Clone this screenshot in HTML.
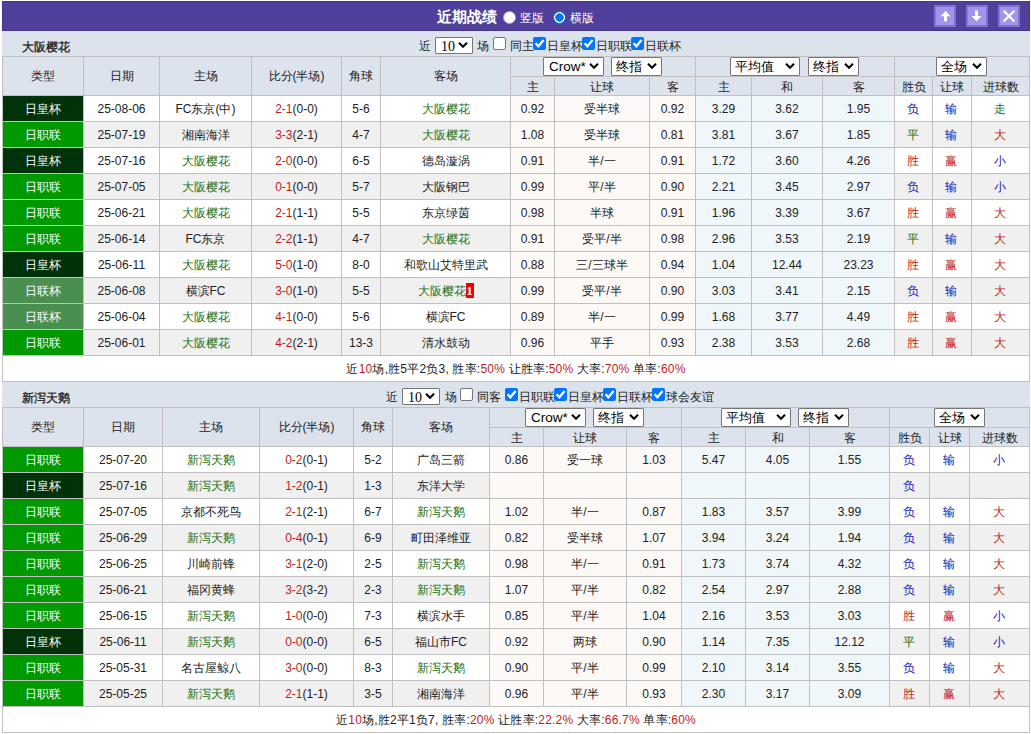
<!DOCTYPE html><html><head><meta charset="utf-8"><style>
html,body{margin:0;padding:0;background:#fff;}
body{width:1031px;height:734px;position:relative;overflow:hidden;font-family:"Liberation Sans",sans-serif;font-size:12px;color:#222222;}
body div{position:absolute;}
.t{text-align:center;white-space:nowrap;}
.sel{background:#fff;border:1px solid #767676;border-radius:1px;color:#000;}
.cb{width:11px;height:11px;border:1px solid #767676;border-radius:2px;background:#fff;}
.cb.on{width:13px;height:13px;border:none;background:#0075ff;}
.radio{width:11px;height:11px;border-radius:50%;background:#fff;border:1px solid #aaa;}
.radio.on{width:13px;height:13px;border:none;background:radial-gradient(circle at 6.5px 6.5px,#0075ff 0,#0075ff 4px,#fff 4.3px,#fff 5.2px,#0075ff 5.5px);}

.btn{width:18px;height:18px;background:#a294ea;border:2px solid #7f70d4;}
.badge{display:inline-block;background:#e00;color:#fff;font-weight:bold;font-family:'Liberation Serif',serif;font-size:13px;line-height:15px;width:8px;text-align:center;vertical-align:top;margin-top:4px;}
</style></head><body>
<div style="left:2px;top:1px;width:1028px;height:30px;background:#50409c;box-sizing:border-box;border:1px solid #43358a;"></div>
<div style="left:2px;top:31px;width:1028px;height:1px;background:#e4e0fa;"></div>
<div class="t" style="left:437px;top:3px;height:28px;line-height:28px;color:#fff;font-weight:bold;font-size:15px;text-align:left;white-space:nowrap;">近期战绩</div>
<div class="radio" style="left:503px;top:11px;"></div>
<div class="t" style="left:520px;top:4px;height:28px;line-height:28px;color:#fff;font-size:12px;text-align:left;white-space:nowrap;">竖版</div>
<div class="radio on" style="left:553px;top:11px;"></div>
<div class="t" style="left:570px;top:4px;height:28px;line-height:28px;color:#fff;font-size:12px;text-align:left;white-space:nowrap;">横版</div>
<div class="btn" style="left:934px;top:5px;"><svg width="22" height="22" viewBox="0 0 22 22" style="position:absolute;left:-2px;top:-2px"><path d="M11.5 6 L16.5 11.3 L13 11.3 L13 16.2 L10 16.2 L10 11.3 L6.5 11.3 Z" fill="#fff"/></svg></div><div class="btn" style="left:966px;top:5px;"><svg width="22" height="22" viewBox="0 0 22 22" style="position:absolute;left:-2px;top:-2px"><path d="M9 5.6 L12 5.6 L12 11 L15.5 11 L10.5 16.3 L5.5 11 L9 11 Z" fill="#fff"/></svg></div><div class="btn" style="left:998px;top:5px;"><svg width="22" height="22" viewBox="0 0 22 22" style="position:absolute;left:-2px;top:-2px"><path d="M5.6 5.8 L16.4 16.4 M16.4 5.8 L5.6 16.4" stroke="#fff" stroke-width="2.1"/></svg></div><div style="left:2px;top:31px;width:1028px;height:25px;background:#dce3ed;"></div><div class="t" style="left:22px;top:35px;width:180px;height:25px;line-height:25px;color:#1a1a1a;text-align:left;font-weight:normal;-webkit-text-stroke:0.3px #1a1a1a;">大阪樱花</div><div style="left:2px;top:56px;width:1028px;height:39px;background:#dce3ed;"></div><div style="left:2px;top:96px;width:1027px;height:25px;background:#ffffff;"></div><div style="left:3px;top:96px;width:80px;height:25px;background:#003309;"></div><div style="left:511px;top:96px;width:43px;height:25px;background:#fdf9f6;"></div><div style="left:555px;top:96px;width:94px;height:25px;background:#fdf9f6;"></div><div style="left:650px;top:96px;width:45px;height:25px;background:#fdf9f6;"></div><div style="left:696px;top:96px;width:55px;height:25px;background:#f0f7fb;"></div><div style="left:752px;top:96px;width:70px;height:25px;background:#f0f7fb;"></div><div style="left:823px;top:96px;width:71px;height:25px;background:#f0f7fb;"></div><div style="left:2px;top:122px;width:1027px;height:25px;background:#f0f0f0;"></div><div style="left:3px;top:122px;width:80px;height:25px;background:#009900;"></div><div style="left:511px;top:122px;width:43px;height:25px;background:#fdf9f6;"></div><div style="left:555px;top:122px;width:94px;height:25px;background:#fdf9f6;"></div><div style="left:650px;top:122px;width:45px;height:25px;background:#fdf9f6;"></div><div style="left:696px;top:122px;width:55px;height:25px;background:#f0f7fb;"></div><div style="left:752px;top:122px;width:70px;height:25px;background:#f0f7fb;"></div><div style="left:823px;top:122px;width:71px;height:25px;background:#f0f7fb;"></div><div style="left:2px;top:148px;width:1027px;height:25px;background:#ffffff;"></div><div style="left:3px;top:148px;width:80px;height:25px;background:#003309;"></div><div style="left:511px;top:148px;width:43px;height:25px;background:#fdf9f6;"></div><div style="left:555px;top:148px;width:94px;height:25px;background:#fdf9f6;"></div><div style="left:650px;top:148px;width:45px;height:25px;background:#fdf9f6;"></div><div style="left:696px;top:148px;width:55px;height:25px;background:#f0f7fb;"></div><div style="left:752px;top:148px;width:70px;height:25px;background:#f0f7fb;"></div><div style="left:823px;top:148px;width:71px;height:25px;background:#f0f7fb;"></div><div style="left:2px;top:174px;width:1027px;height:25px;background:#f0f0f0;"></div><div style="left:3px;top:174px;width:80px;height:25px;background:#009900;"></div><div style="left:511px;top:174px;width:43px;height:25px;background:#fdf9f6;"></div><div style="left:555px;top:174px;width:94px;height:25px;background:#fdf9f6;"></div><div style="left:650px;top:174px;width:45px;height:25px;background:#fdf9f6;"></div><div style="left:696px;top:174px;width:55px;height:25px;background:#f0f7fb;"></div><div style="left:752px;top:174px;width:70px;height:25px;background:#f0f7fb;"></div><div style="left:823px;top:174px;width:71px;height:25px;background:#f0f7fb;"></div><div style="left:2px;top:200px;width:1027px;height:25px;background:#ffffff;"></div><div style="left:3px;top:200px;width:80px;height:25px;background:#009900;"></div><div style="left:511px;top:200px;width:43px;height:25px;background:#fdf9f6;"></div><div style="left:555px;top:200px;width:94px;height:25px;background:#fdf9f6;"></div><div style="left:650px;top:200px;width:45px;height:25px;background:#fdf9f6;"></div><div style="left:696px;top:200px;width:55px;height:25px;background:#f0f7fb;"></div><div style="left:752px;top:200px;width:70px;height:25px;background:#f0f7fb;"></div><div style="left:823px;top:200px;width:71px;height:25px;background:#f0f7fb;"></div><div style="left:2px;top:226px;width:1027px;height:25px;background:#f0f0f0;"></div><div style="left:3px;top:226px;width:80px;height:25px;background:#009900;"></div><div style="left:511px;top:226px;width:43px;height:25px;background:#fdf9f6;"></div><div style="left:555px;top:226px;width:94px;height:25px;background:#fdf9f6;"></div><div style="left:650px;top:226px;width:45px;height:25px;background:#fdf9f6;"></div><div style="left:696px;top:226px;width:55px;height:25px;background:#f0f7fb;"></div><div style="left:752px;top:226px;width:70px;height:25px;background:#f0f7fb;"></div><div style="left:823px;top:226px;width:71px;height:25px;background:#f0f7fb;"></div><div style="left:2px;top:252px;width:1027px;height:25px;background:#ffffff;"></div><div style="left:3px;top:252px;width:80px;height:25px;background:#003309;"></div><div style="left:511px;top:252px;width:43px;height:25px;background:#fdf9f6;"></div><div style="left:555px;top:252px;width:94px;height:25px;background:#fdf9f6;"></div><div style="left:650px;top:252px;width:45px;height:25px;background:#fdf9f6;"></div><div style="left:696px;top:252px;width:55px;height:25px;background:#f0f7fb;"></div><div style="left:752px;top:252px;width:70px;height:25px;background:#f0f7fb;"></div><div style="left:823px;top:252px;width:71px;height:25px;background:#f0f7fb;"></div><div style="left:2px;top:278px;width:1027px;height:25px;background:#f0f0f0;"></div><div style="left:3px;top:278px;width:80px;height:25px;background:#4a8e50;"></div><div style="left:511px;top:278px;width:43px;height:25px;background:#fdf9f6;"></div><div style="left:555px;top:278px;width:94px;height:25px;background:#fdf9f6;"></div><div style="left:650px;top:278px;width:45px;height:25px;background:#fdf9f6;"></div><div style="left:696px;top:278px;width:55px;height:25px;background:#f0f7fb;"></div><div style="left:752px;top:278px;width:70px;height:25px;background:#f0f7fb;"></div><div style="left:823px;top:278px;width:71px;height:25px;background:#f0f7fb;"></div><div style="left:2px;top:304px;width:1027px;height:25px;background:#ffffff;"></div><div style="left:3px;top:304px;width:80px;height:25px;background:#4a8e50;"></div><div style="left:511px;top:304px;width:43px;height:25px;background:#fdf9f6;"></div><div style="left:555px;top:304px;width:94px;height:25px;background:#fdf9f6;"></div><div style="left:650px;top:304px;width:45px;height:25px;background:#fdf9f6;"></div><div style="left:696px;top:304px;width:55px;height:25px;background:#f0f7fb;"></div><div style="left:752px;top:304px;width:70px;height:25px;background:#f0f7fb;"></div><div style="left:823px;top:304px;width:71px;height:25px;background:#f0f7fb;"></div><div style="left:2px;top:330px;width:1027px;height:25px;background:#f0f0f0;"></div><div style="left:3px;top:330px;width:80px;height:25px;background:#009900;"></div><div style="left:511px;top:330px;width:43px;height:25px;background:#fdf9f6;"></div><div style="left:555px;top:330px;width:94px;height:25px;background:#fdf9f6;"></div><div style="left:650px;top:330px;width:45px;height:25px;background:#fdf9f6;"></div><div style="left:696px;top:330px;width:55px;height:25px;background:#f0f7fb;"></div><div style="left:752px;top:330px;width:70px;height:25px;background:#f0f7fb;"></div><div style="left:823px;top:330px;width:71px;height:25px;background:#f0f7fb;"></div><div style="left:2px;top:356px;width:1027px;height:25px;background:#ffffff;"></div><div style="left:2px;top:56px;width:1028px;height:1px;background:#c0c0c0;"></div><div style="left:510px;top:76px;width:385px;height:1px;background:#c0c0c0;"></div><div style="left:894px;top:76px;width:136px;height:1px;background:#c0c0c0;"></div><div style="left:2px;top:95px;width:1028px;height:1px;background:#c0c0c0;"></div><div style="left:2px;top:121px;width:1028px;height:1px;background:#c0c0c0;"></div><div style="left:2px;top:147px;width:1028px;height:1px;background:#c0c0c0;"></div><div style="left:2px;top:173px;width:1028px;height:1px;background:#c0c0c0;"></div><div style="left:2px;top:199px;width:1028px;height:1px;background:#c0c0c0;"></div><div style="left:2px;top:225px;width:1028px;height:1px;background:#c0c0c0;"></div><div style="left:2px;top:251px;width:1028px;height:1px;background:#c0c0c0;"></div><div style="left:2px;top:277px;width:1028px;height:1px;background:#c0c0c0;"></div><div style="left:2px;top:303px;width:1028px;height:1px;background:#c0c0c0;"></div><div style="left:2px;top:329px;width:1028px;height:1px;background:#c0c0c0;"></div><div style="left:2px;top:355px;width:1028px;height:1px;background:#c0c0c0;"></div><div style="left:2px;top:381px;width:1028px;height:1px;background:#c0c0c0;"></div><div style="left:2px;top:56px;width:1px;height:326px;background:#c0c0c0;"></div><div style="left:83px;top:56px;width:1px;height:300px;background:#c0c0c0;"></div><div style="left:159px;top:56px;width:1px;height:300px;background:#c0c0c0;"></div><div style="left:251px;top:56px;width:1px;height:300px;background:#c0c0c0;"></div><div style="left:341px;top:56px;width:1px;height:300px;background:#c0c0c0;"></div><div style="left:380px;top:56px;width:1px;height:300px;background:#c0c0c0;"></div><div style="left:510px;top:56px;width:1px;height:300px;background:#c0c0c0;"></div><div style="left:554px;top:76px;width:1px;height:280px;background:#c0c0c0;"></div><div style="left:649px;top:76px;width:1px;height:280px;background:#c0c0c0;"></div><div style="left:695px;top:56px;width:1px;height:300px;background:#c0c0c0;"></div><div style="left:751px;top:76px;width:1px;height:280px;background:#c0c0c0;"></div><div style="left:822px;top:76px;width:1px;height:280px;background:#c0c0c0;"></div><div style="left:894px;top:56px;width:1px;height:300px;background:#c0c0c0;"></div><div style="left:932px;top:76px;width:1px;height:280px;background:#c0c0c0;"></div><div style="left:971px;top:76px;width:1px;height:280px;background:#c0c0c0;"></div><div style="left:1029px;top:56px;width:1px;height:326px;background:#c0c0c0;"></div><div class="t" style="left:3px;top:57px;width:80px;height:38px;line-height:38px;color:#222222;">类型</div><div class="t" style="left:84px;top:57px;width:75px;height:38px;line-height:38px;color:#222222;">日期</div><div class="t" style="left:160px;top:57px;width:91px;height:38px;line-height:38px;color:#222222;">主场</div><div class="t" style="left:252px;top:57px;width:89px;height:38px;line-height:38px;color:#222222;">比分(半场)</div><div class="t" style="left:342px;top:57px;width:38px;height:38px;line-height:38px;color:#222222;">角球</div><div class="t" style="left:381px;top:57px;width:129px;height:38px;line-height:38px;color:#222222;">客场</div><div class="t" style="left:511px;top:78px;width:43px;height:18px;line-height:18px;color:#222222;">主</div><div class="t" style="left:555px;top:78px;width:94px;height:18px;line-height:18px;color:#222222;">让球</div><div class="t" style="left:650px;top:78px;width:45px;height:18px;line-height:18px;color:#222222;">客</div><div class="t" style="left:696px;top:78px;width:55px;height:18px;line-height:18px;color:#222222;">主</div><div class="t" style="left:752px;top:78px;width:70px;height:18px;line-height:18px;color:#222222;">和</div><div class="t" style="left:823px;top:78px;width:71px;height:18px;line-height:18px;color:#222222;">客</div><div class="t" style="left:895px;top:78px;width:37px;height:18px;line-height:18px;color:#222222;">胜负</div><div class="t" style="left:933px;top:78px;width:38px;height:18px;line-height:18px;color:#222222;">让球</div><div class="t" style="left:972px;top:78px;width:57px;height:18px;line-height:18px;color:#222222;">进球数</div><div class="t" style="left:3px;top:97px;width:80px;height:25px;line-height:25px;color:#ffffff;font-size:12px;">日皇杯</div><div class="t" style="left:84px;top:97px;width:75px;height:25px;line-height:25px;color:#222222;font-size:12px;">25-08-06</div><div class="t" style="left:160px;top:97px;width:91px;height:25px;line-height:25px;color:#222222;font-size:12px;">FC东京(中)</div><div class="t" style="left:252px;top:97px;width:89px;height:25px;line-height:25px;color:#222222;font-size:12px;"><span style="color:#c01c1c">2-1</span>(0-0)</div><div class="t" style="left:342px;top:97px;width:38px;height:25px;line-height:25px;color:#222222;font-size:12px;">5-6</div><div class="t" style="left:381px;top:97px;width:129px;height:25px;line-height:25px;color:#207020;font-size:12px;">大阪樱花</div><div class="t" style="left:511px;top:97px;width:43px;height:25px;line-height:25px;color:#222222;font-size:12px;">0.92</div><div class="t" style="left:555px;top:97px;width:94px;height:25px;line-height:25px;color:#222222;font-size:12px;">受半球</div><div class="t" style="left:650px;top:97px;width:45px;height:25px;line-height:25px;color:#222222;font-size:12px;">0.92</div><div class="t" style="left:696px;top:97px;width:55px;height:25px;line-height:25px;color:#222222;font-size:12px;">3.29</div><div class="t" style="left:752px;top:97px;width:70px;height:25px;line-height:25px;color:#222222;font-size:12px;">3.62</div><div class="t" style="left:823px;top:97px;width:71px;height:25px;line-height:25px;color:#222222;font-size:12px;">1.95</div><div class="t" style="left:894px;top:97px;width:37px;height:25px;line-height:25px;color:#1616b8;font-size:12px;">负</div><div class="t" style="left:932px;top:97px;width:38px;height:25px;line-height:25px;color:#1616b8;font-size:12px;">输</div><div class="t" style="left:971px;top:97px;width:57px;height:25px;line-height:25px;color:#207020;font-size:12px;">走</div><div class="t" style="left:3px;top:123px;width:80px;height:25px;line-height:25px;color:#ffffff;font-size:12px;">日职联</div><div class="t" style="left:84px;top:123px;width:75px;height:25px;line-height:25px;color:#222222;font-size:12px;">25-07-19</div><div class="t" style="left:160px;top:123px;width:91px;height:25px;line-height:25px;color:#222222;font-size:12px;">湘南海洋</div><div class="t" style="left:252px;top:123px;width:89px;height:25px;line-height:25px;color:#222222;font-size:12px;"><span style="color:#c01c1c">3-3</span>(2-1)</div><div class="t" style="left:342px;top:123px;width:38px;height:25px;line-height:25px;color:#222222;font-size:12px;">4-7</div><div class="t" style="left:381px;top:123px;width:129px;height:25px;line-height:25px;color:#207020;font-size:12px;">大阪樱花</div><div class="t" style="left:511px;top:123px;width:43px;height:25px;line-height:25px;color:#222222;font-size:12px;">1.08</div><div class="t" style="left:555px;top:123px;width:94px;height:25px;line-height:25px;color:#222222;font-size:12px;">受半球</div><div class="t" style="left:650px;top:123px;width:45px;height:25px;line-height:25px;color:#222222;font-size:12px;">0.81</div><div class="t" style="left:696px;top:123px;width:55px;height:25px;line-height:25px;color:#222222;font-size:12px;">3.81</div><div class="t" style="left:752px;top:123px;width:70px;height:25px;line-height:25px;color:#222222;font-size:12px;">3.67</div><div class="t" style="left:823px;top:123px;width:71px;height:25px;line-height:25px;color:#222222;font-size:12px;">1.85</div><div class="t" style="left:894px;top:123px;width:37px;height:25px;line-height:25px;color:#207020;font-size:12px;">平</div><div class="t" style="left:932px;top:123px;width:38px;height:25px;line-height:25px;color:#1616b8;font-size:12px;">输</div><div class="t" style="left:971px;top:123px;width:57px;height:25px;line-height:25px;color:#c01c1c;font-size:12px;">大</div><div class="t" style="left:3px;top:149px;width:80px;height:25px;line-height:25px;color:#ffffff;font-size:12px;">日皇杯</div><div class="t" style="left:84px;top:149px;width:75px;height:25px;line-height:25px;color:#222222;font-size:12px;">25-07-16</div><div class="t" style="left:160px;top:149px;width:91px;height:25px;line-height:25px;color:#207020;font-size:12px;">大阪樱花</div><div class="t" style="left:252px;top:149px;width:89px;height:25px;line-height:25px;color:#222222;font-size:12px;"><span style="color:#c01c1c">2-0</span>(0-0)</div><div class="t" style="left:342px;top:149px;width:38px;height:25px;line-height:25px;color:#222222;font-size:12px;">6-5</div><div class="t" style="left:381px;top:149px;width:129px;height:25px;line-height:25px;color:#222222;font-size:12px;">德岛漩涡</div><div class="t" style="left:511px;top:149px;width:43px;height:25px;line-height:25px;color:#222222;font-size:12px;">0.91</div><div class="t" style="left:555px;top:149px;width:94px;height:25px;line-height:25px;color:#222222;font-size:12px;">半/一</div><div class="t" style="left:650px;top:149px;width:45px;height:25px;line-height:25px;color:#222222;font-size:12px;">0.91</div><div class="t" style="left:696px;top:149px;width:55px;height:25px;line-height:25px;color:#222222;font-size:12px;">1.72</div><div class="t" style="left:752px;top:149px;width:70px;height:25px;line-height:25px;color:#222222;font-size:12px;">3.60</div><div class="t" style="left:823px;top:149px;width:71px;height:25px;line-height:25px;color:#222222;font-size:12px;">4.26</div><div class="t" style="left:894px;top:149px;width:37px;height:25px;line-height:25px;color:#c01c1c;font-size:12px;">胜</div><div class="t" style="left:932px;top:149px;width:38px;height:25px;line-height:25px;color:#c01c1c;font-size:12px;">赢</div><div class="t" style="left:971px;top:149px;width:57px;height:25px;line-height:25px;color:#1616b8;font-size:12px;">小</div><div class="t" style="left:3px;top:175px;width:80px;height:25px;line-height:25px;color:#ffffff;font-size:12px;">日职联</div><div class="t" style="left:84px;top:175px;width:75px;height:25px;line-height:25px;color:#222222;font-size:12px;">25-07-05</div><div class="t" style="left:160px;top:175px;width:91px;height:25px;line-height:25px;color:#207020;font-size:12px;">大阪樱花</div><div class="t" style="left:252px;top:175px;width:89px;height:25px;line-height:25px;color:#222222;font-size:12px;"><span style="color:#c01c1c">0-1</span>(0-0)</div><div class="t" style="left:342px;top:175px;width:38px;height:25px;line-height:25px;color:#222222;font-size:12px;">5-7</div><div class="t" style="left:381px;top:175px;width:129px;height:25px;line-height:25px;color:#222222;font-size:12px;">大阪钢巴</div><div class="t" style="left:511px;top:175px;width:43px;height:25px;line-height:25px;color:#222222;font-size:12px;">0.99</div><div class="t" style="left:555px;top:175px;width:94px;height:25px;line-height:25px;color:#222222;font-size:12px;">平/半</div><div class="t" style="left:650px;top:175px;width:45px;height:25px;line-height:25px;color:#222222;font-size:12px;">0.90</div><div class="t" style="left:696px;top:175px;width:55px;height:25px;line-height:25px;color:#222222;font-size:12px;">2.21</div><div class="t" style="left:752px;top:175px;width:70px;height:25px;line-height:25px;color:#222222;font-size:12px;">3.45</div><div class="t" style="left:823px;top:175px;width:71px;height:25px;line-height:25px;color:#222222;font-size:12px;">2.97</div><div class="t" style="left:894px;top:175px;width:37px;height:25px;line-height:25px;color:#1616b8;font-size:12px;">负</div><div class="t" style="left:932px;top:175px;width:38px;height:25px;line-height:25px;color:#1616b8;font-size:12px;">输</div><div class="t" style="left:971px;top:175px;width:57px;height:25px;line-height:25px;color:#1616b8;font-size:12px;">小</div><div class="t" style="left:3px;top:201px;width:80px;height:25px;line-height:25px;color:#ffffff;font-size:12px;">日职联</div><div class="t" style="left:84px;top:201px;width:75px;height:25px;line-height:25px;color:#222222;font-size:12px;">25-06-21</div><div class="t" style="left:160px;top:201px;width:91px;height:25px;line-height:25px;color:#207020;font-size:12px;">大阪樱花</div><div class="t" style="left:252px;top:201px;width:89px;height:25px;line-height:25px;color:#222222;font-size:12px;"><span style="color:#c01c1c">2-1</span>(1-1)</div><div class="t" style="left:342px;top:201px;width:38px;height:25px;line-height:25px;color:#222222;font-size:12px;">5-5</div><div class="t" style="left:381px;top:201px;width:129px;height:25px;line-height:25px;color:#222222;font-size:12px;">东京绿茵</div><div class="t" style="left:511px;top:201px;width:43px;height:25px;line-height:25px;color:#222222;font-size:12px;">0.98</div><div class="t" style="left:555px;top:201px;width:94px;height:25px;line-height:25px;color:#222222;font-size:12px;">半球</div><div class="t" style="left:650px;top:201px;width:45px;height:25px;line-height:25px;color:#222222;font-size:12px;">0.91</div><div class="t" style="left:696px;top:201px;width:55px;height:25px;line-height:25px;color:#222222;font-size:12px;">1.96</div><div class="t" style="left:752px;top:201px;width:70px;height:25px;line-height:25px;color:#222222;font-size:12px;">3.39</div><div class="t" style="left:823px;top:201px;width:71px;height:25px;line-height:25px;color:#222222;font-size:12px;">3.67</div><div class="t" style="left:894px;top:201px;width:37px;height:25px;line-height:25px;color:#c01c1c;font-size:12px;">胜</div><div class="t" style="left:932px;top:201px;width:38px;height:25px;line-height:25px;color:#c01c1c;font-size:12px;">赢</div><div class="t" style="left:971px;top:201px;width:57px;height:25px;line-height:25px;color:#c01c1c;font-size:12px;">大</div><div class="t" style="left:3px;top:227px;width:80px;height:25px;line-height:25px;color:#ffffff;font-size:12px;">日职联</div><div class="t" style="left:84px;top:227px;width:75px;height:25px;line-height:25px;color:#222222;font-size:12px;">25-06-14</div><div class="t" style="left:160px;top:227px;width:91px;height:25px;line-height:25px;color:#222222;font-size:12px;">FC东京</div><div class="t" style="left:252px;top:227px;width:89px;height:25px;line-height:25px;color:#222222;font-size:12px;"><span style="color:#c01c1c">2-2</span>(1-1)</div><div class="t" style="left:342px;top:227px;width:38px;height:25px;line-height:25px;color:#222222;font-size:12px;">4-7</div><div class="t" style="left:381px;top:227px;width:129px;height:25px;line-height:25px;color:#207020;font-size:12px;">大阪樱花</div><div class="t" style="left:511px;top:227px;width:43px;height:25px;line-height:25px;color:#222222;font-size:12px;">0.91</div><div class="t" style="left:555px;top:227px;width:94px;height:25px;line-height:25px;color:#222222;font-size:12px;">受平/半</div><div class="t" style="left:650px;top:227px;width:45px;height:25px;line-height:25px;color:#222222;font-size:12px;">0.98</div><div class="t" style="left:696px;top:227px;width:55px;height:25px;line-height:25px;color:#222222;font-size:12px;">2.96</div><div class="t" style="left:752px;top:227px;width:70px;height:25px;line-height:25px;color:#222222;font-size:12px;">3.53</div><div class="t" style="left:823px;top:227px;width:71px;height:25px;line-height:25px;color:#222222;font-size:12px;">2.19</div><div class="t" style="left:894px;top:227px;width:37px;height:25px;line-height:25px;color:#207020;font-size:12px;">平</div><div class="t" style="left:932px;top:227px;width:38px;height:25px;line-height:25px;color:#1616b8;font-size:12px;">输</div><div class="t" style="left:971px;top:227px;width:57px;height:25px;line-height:25px;color:#c01c1c;font-size:12px;">大</div><div class="t" style="left:3px;top:253px;width:80px;height:25px;line-height:25px;color:#ffffff;font-size:12px;">日皇杯</div><div class="t" style="left:84px;top:253px;width:75px;height:25px;line-height:25px;color:#222222;font-size:12px;">25-06-11</div><div class="t" style="left:160px;top:253px;width:91px;height:25px;line-height:25px;color:#207020;font-size:12px;">大阪樱花</div><div class="t" style="left:252px;top:253px;width:89px;height:25px;line-height:25px;color:#222222;font-size:12px;"><span style="color:#c01c1c">5-0</span>(1-0)</div><div class="t" style="left:342px;top:253px;width:38px;height:25px;line-height:25px;color:#222222;font-size:12px;">8-0</div><div class="t" style="left:381px;top:253px;width:129px;height:25px;line-height:25px;color:#222222;font-size:12px;">和歌山艾特里武</div><div class="t" style="left:511px;top:253px;width:43px;height:25px;line-height:25px;color:#222222;font-size:12px;">0.88</div><div class="t" style="left:555px;top:253px;width:94px;height:25px;line-height:25px;color:#222222;font-size:12px;">三/三球半</div><div class="t" style="left:650px;top:253px;width:45px;height:25px;line-height:25px;color:#222222;font-size:12px;">0.94</div><div class="t" style="left:696px;top:253px;width:55px;height:25px;line-height:25px;color:#222222;font-size:12px;">1.04</div><div class="t" style="left:752px;top:253px;width:70px;height:25px;line-height:25px;color:#222222;font-size:12px;">12.44</div><div class="t" style="left:823px;top:253px;width:71px;height:25px;line-height:25px;color:#222222;font-size:12px;">23.23</div><div class="t" style="left:894px;top:253px;width:37px;height:25px;line-height:25px;color:#c01c1c;font-size:12px;">胜</div><div class="t" style="left:932px;top:253px;width:38px;height:25px;line-height:25px;color:#c01c1c;font-size:12px;">赢</div><div class="t" style="left:971px;top:253px;width:57px;height:25px;line-height:25px;color:#c01c1c;font-size:12px;">大</div><div class="t" style="left:3px;top:279px;width:80px;height:25px;line-height:25px;color:#ffffff;font-size:12px;">日联杯</div><div class="t" style="left:84px;top:279px;width:75px;height:25px;line-height:25px;color:#222222;font-size:12px;">25-06-08</div><div class="t" style="left:160px;top:279px;width:91px;height:25px;line-height:25px;color:#222222;font-size:12px;">横滨FC</div><div class="t" style="left:252px;top:279px;width:89px;height:25px;line-height:25px;color:#222222;font-size:12px;"><span style="color:#c01c1c">3-0</span>(1-0)</div><div class="t" style="left:342px;top:279px;width:38px;height:25px;line-height:25px;color:#222222;font-size:12px;">5-5</div><div class="t" style="left:381px;top:279px;width:129px;height:25px;line-height:25px;color:#207020;font-size:12px;">大阪樱花<span class="badge">1</span></div><div class="t" style="left:511px;top:279px;width:43px;height:25px;line-height:25px;color:#222222;font-size:12px;">0.99</div><div class="t" style="left:555px;top:279px;width:94px;height:25px;line-height:25px;color:#222222;font-size:12px;">受平/半</div><div class="t" style="left:650px;top:279px;width:45px;height:25px;line-height:25px;color:#222222;font-size:12px;">0.90</div><div class="t" style="left:696px;top:279px;width:55px;height:25px;line-height:25px;color:#222222;font-size:12px;">3.03</div><div class="t" style="left:752px;top:279px;width:70px;height:25px;line-height:25px;color:#222222;font-size:12px;">3.41</div><div class="t" style="left:823px;top:279px;width:71px;height:25px;line-height:25px;color:#222222;font-size:12px;">2.15</div><div class="t" style="left:894px;top:279px;width:37px;height:25px;line-height:25px;color:#1616b8;font-size:12px;">负</div><div class="t" style="left:932px;top:279px;width:38px;height:25px;line-height:25px;color:#1616b8;font-size:12px;">输</div><div class="t" style="left:971px;top:279px;width:57px;height:25px;line-height:25px;color:#c01c1c;font-size:12px;">大</div><div class="t" style="left:3px;top:305px;width:80px;height:25px;line-height:25px;color:#ffffff;font-size:12px;">日联杯</div><div class="t" style="left:84px;top:305px;width:75px;height:25px;line-height:25px;color:#222222;font-size:12px;">25-06-04</div><div class="t" style="left:160px;top:305px;width:91px;height:25px;line-height:25px;color:#207020;font-size:12px;">大阪樱花</div><div class="t" style="left:252px;top:305px;width:89px;height:25px;line-height:25px;color:#222222;font-size:12px;"><span style="color:#c01c1c">4-1</span>(0-0)</div><div class="t" style="left:342px;top:305px;width:38px;height:25px;line-height:25px;color:#222222;font-size:12px;">5-6</div><div class="t" style="left:381px;top:305px;width:129px;height:25px;line-height:25px;color:#222222;font-size:12px;">横滨FC</div><div class="t" style="left:511px;top:305px;width:43px;height:25px;line-height:25px;color:#222222;font-size:12px;">0.89</div><div class="t" style="left:555px;top:305px;width:94px;height:25px;line-height:25px;color:#222222;font-size:12px;">半/一</div><div class="t" style="left:650px;top:305px;width:45px;height:25px;line-height:25px;color:#222222;font-size:12px;">0.99</div><div class="t" style="left:696px;top:305px;width:55px;height:25px;line-height:25px;color:#222222;font-size:12px;">1.68</div><div class="t" style="left:752px;top:305px;width:70px;height:25px;line-height:25px;color:#222222;font-size:12px;">3.77</div><div class="t" style="left:823px;top:305px;width:71px;height:25px;line-height:25px;color:#222222;font-size:12px;">4.49</div><div class="t" style="left:894px;top:305px;width:37px;height:25px;line-height:25px;color:#c01c1c;font-size:12px;">胜</div><div class="t" style="left:932px;top:305px;width:38px;height:25px;line-height:25px;color:#c01c1c;font-size:12px;">赢</div><div class="t" style="left:971px;top:305px;width:57px;height:25px;line-height:25px;color:#c01c1c;font-size:12px;">大</div><div class="t" style="left:3px;top:331px;width:80px;height:25px;line-height:25px;color:#ffffff;font-size:12px;">日职联</div><div class="t" style="left:84px;top:331px;width:75px;height:25px;line-height:25px;color:#222222;font-size:12px;">25-06-01</div><div class="t" style="left:160px;top:331px;width:91px;height:25px;line-height:25px;color:#207020;font-size:12px;">大阪樱花</div><div class="t" style="left:252px;top:331px;width:89px;height:25px;line-height:25px;color:#222222;font-size:12px;"><span style="color:#c01c1c">4-2</span>(2-1)</div><div class="t" style="left:342px;top:331px;width:38px;height:25px;line-height:25px;color:#222222;font-size:12px;">13-3</div><div class="t" style="left:381px;top:331px;width:129px;height:25px;line-height:25px;color:#222222;font-size:12px;">清水鼓动</div><div class="t" style="left:511px;top:331px;width:43px;height:25px;line-height:25px;color:#222222;font-size:12px;">0.96</div><div class="t" style="left:555px;top:331px;width:94px;height:25px;line-height:25px;color:#222222;font-size:12px;">平手</div><div class="t" style="left:650px;top:331px;width:45px;height:25px;line-height:25px;color:#222222;font-size:12px;">0.93</div><div class="t" style="left:696px;top:331px;width:55px;height:25px;line-height:25px;color:#222222;font-size:12px;">2.38</div><div class="t" style="left:752px;top:331px;width:70px;height:25px;line-height:25px;color:#222222;font-size:12px;">3.53</div><div class="t" style="left:823px;top:331px;width:71px;height:25px;line-height:25px;color:#222222;font-size:12px;">2.68</div><div class="t" style="left:894px;top:331px;width:37px;height:25px;line-height:25px;color:#c01c1c;font-size:12px;">胜</div><div class="t" style="left:932px;top:331px;width:38px;height:25px;line-height:25px;color:#c01c1c;font-size:12px;">赢</div><div class="t" style="left:971px;top:331px;width:57px;height:25px;line-height:25px;color:#c01c1c;font-size:12px;">大</div><div class="t" style="left:3px;top:357px;width:1026px;height:25px;line-height:25px;color:#222222;font-size:12px;letter-spacing:0.2px;">近<span style="color:#c01c1c">10</span>场,胜5平2负3, 胜率:<span style="color:#c01c1c">50%</span> 让胜率:<span style="color:#c01c1c">50%</span> 大率:<span style="color:#c01c1c">70%</span> 单率:<span style="color:#c01c1c">60%</span></div><div class="t" style="left:419px;top:38px;height:16px;line-height:16px;text-align:left;white-space:nowrap;">近</div><div class="sel" style="left:435px;top:37px;width:36px;height:15px;"><span style="position:absolute;left:5px;top:0;line-height:15px;font-size:14px;font-family:'Liberation Serif',serif;padding-top:1px;">10</span><svg style="position:absolute;right:4px;top:4px" width="10" height="6" viewBox="0 0 10 6"><path d="M1 0.8 L5 4.8 L9 0.8" fill="none" stroke="#000" stroke-width="2"/></svg></div><div class="t" style="left:477px;top:38px;height:16px;line-height:16px;text-align:left;white-space:nowrap;">场</div><div class="cb" style="left:493px;top:37px;"></div><div class="t" style="left:510px;top:38px;height:16px;line-height:16px;text-align:left;white-space:nowrap;">同主</div><div class="cb on" style="left:533px;top:37px;"><svg width="13" height="13" viewBox="0 0 13 13" style="position:absolute;left:0;top:0"><path d="M2.6 6.3 L5.4 9.2 L10.6 3" fill="none" stroke="#fff" stroke-width="2.3"/></svg></div><div class="t" style="left:547px;top:38px;height:16px;line-height:16px;text-align:left;white-space:nowrap;">日皇杯</div><div class="cb on" style="left:582px;top:37px;"><svg width="13" height="13" viewBox="0 0 13 13" style="position:absolute;left:0;top:0"><path d="M2.6 6.3 L5.4 9.2 L10.6 3" fill="none" stroke="#fff" stroke-width="2.3"/></svg></div><div class="t" style="left:596px;top:38px;height:16px;line-height:16px;text-align:left;white-space:nowrap;">日职联</div><div class="cb on" style="left:631px;top:37px;"><svg width="13" height="13" viewBox="0 0 13 13" style="position:absolute;left:0;top:0"><path d="M2.6 6.3 L5.4 9.2 L10.6 3" fill="none" stroke="#fff" stroke-width="2.3"/></svg></div><div class="t" style="left:645px;top:38px;height:16px;line-height:16px;text-align:left;white-space:nowrap;">日联杯</div><div class="sel" style="left:543px;top:57px;width:59px;height:17px;"><span style="position:absolute;left:5px;top:0;line-height:17px;font-size:13.5px;">Crow*</span><svg style="position:absolute;right:4px;top:5px" width="10" height="6" viewBox="0 0 10 6"><path d="M1 0.8 L5 4.8 L9 0.8" fill="none" stroke="#000" stroke-width="2"/></svg></div><div class="sel" style="left:611px;top:57px;width:49px;height:17px;"><span style="position:absolute;left:4px;top:0;line-height:17px;font-size:13px;">终指</span><svg style="position:absolute;right:4px;top:5px" width="10" height="6" viewBox="0 0 10 6"><path d="M1 0.8 L5 4.8 L9 0.8" fill="none" stroke="#000" stroke-width="2"/></svg></div><div class="sel" style="left:730px;top:57px;width:68px;height:17px;"><span style="position:absolute;left:4px;top:0;line-height:17px;font-size:13px;">平均值</span><svg style="position:absolute;right:4px;top:5px" width="10" height="6" viewBox="0 0 10 6"><path d="M1 0.8 L5 4.8 L9 0.8" fill="none" stroke="#000" stroke-width="2"/></svg></div><div class="sel" style="left:808px;top:57px;width:49px;height:17px;"><span style="position:absolute;left:4px;top:0;line-height:17px;font-size:13px;">终指</span><svg style="position:absolute;right:4px;top:5px" width="10" height="6" viewBox="0 0 10 6"><path d="M1 0.8 L5 4.8 L9 0.8" fill="none" stroke="#000" stroke-width="2"/></svg></div><div class="sel" style="left:936px;top:57px;width:49px;height:17px;"><span style="position:absolute;left:4px;top:0;line-height:17px;font-size:13px;">全场</span><svg style="position:absolute;right:4px;top:5px" width="10" height="6" viewBox="0 0 10 6"><path d="M1 0.8 L5 4.8 L9 0.8" fill="none" stroke="#000" stroke-width="2"/></svg></div><div style="left:2px;top:382px;width:1028px;height:25px;background:#dce3ed;"></div><div class="t" style="left:22px;top:386px;width:180px;height:25px;line-height:25px;color:#1a1a1a;text-align:left;font-weight:normal;-webkit-text-stroke:0.3px #1a1a1a;">新泻天鹅</div><div style="left:2px;top:407px;width:1028px;height:39px;background:#dce3ed;"></div><div style="left:2px;top:447px;width:1027px;height:25px;background:#ffffff;"></div><div style="left:3px;top:447px;width:80px;height:25px;background:#009900;"></div><div style="left:490px;top:447px;width:53px;height:25px;background:#fdf9f6;"></div><div style="left:544px;top:447px;width:82px;height:25px;background:#fdf9f6;"></div><div style="left:627px;top:447px;width:54px;height:25px;background:#fdf9f6;"></div><div style="left:682px;top:447px;width:63px;height:25px;background:#f0f7fb;"></div><div style="left:746px;top:447px;width:63px;height:25px;background:#f0f7fb;"></div><div style="left:810px;top:447px;width:79px;height:25px;background:#f0f7fb;"></div><div style="left:2px;top:473px;width:1027px;height:25px;background:#f0f0f0;"></div><div style="left:3px;top:473px;width:80px;height:25px;background:#003309;"></div><div style="left:490px;top:473px;width:53px;height:25px;background:#fdf9f6;"></div><div style="left:544px;top:473px;width:82px;height:25px;background:#fdf9f6;"></div><div style="left:627px;top:473px;width:54px;height:25px;background:#fdf9f6;"></div><div style="left:682px;top:473px;width:63px;height:25px;background:#f0f7fb;"></div><div style="left:746px;top:473px;width:63px;height:25px;background:#f0f7fb;"></div><div style="left:810px;top:473px;width:79px;height:25px;background:#f0f7fb;"></div><div style="left:2px;top:499px;width:1027px;height:25px;background:#ffffff;"></div><div style="left:3px;top:499px;width:80px;height:25px;background:#009900;"></div><div style="left:490px;top:499px;width:53px;height:25px;background:#fdf9f6;"></div><div style="left:544px;top:499px;width:82px;height:25px;background:#fdf9f6;"></div><div style="left:627px;top:499px;width:54px;height:25px;background:#fdf9f6;"></div><div style="left:682px;top:499px;width:63px;height:25px;background:#f0f7fb;"></div><div style="left:746px;top:499px;width:63px;height:25px;background:#f0f7fb;"></div><div style="left:810px;top:499px;width:79px;height:25px;background:#f0f7fb;"></div><div style="left:2px;top:525px;width:1027px;height:25px;background:#f0f0f0;"></div><div style="left:3px;top:525px;width:80px;height:25px;background:#009900;"></div><div style="left:490px;top:525px;width:53px;height:25px;background:#fdf9f6;"></div><div style="left:544px;top:525px;width:82px;height:25px;background:#fdf9f6;"></div><div style="left:627px;top:525px;width:54px;height:25px;background:#fdf9f6;"></div><div style="left:682px;top:525px;width:63px;height:25px;background:#f0f7fb;"></div><div style="left:746px;top:525px;width:63px;height:25px;background:#f0f7fb;"></div><div style="left:810px;top:525px;width:79px;height:25px;background:#f0f7fb;"></div><div style="left:2px;top:551px;width:1027px;height:25px;background:#ffffff;"></div><div style="left:3px;top:551px;width:80px;height:25px;background:#009900;"></div><div style="left:490px;top:551px;width:53px;height:25px;background:#fdf9f6;"></div><div style="left:544px;top:551px;width:82px;height:25px;background:#fdf9f6;"></div><div style="left:627px;top:551px;width:54px;height:25px;background:#fdf9f6;"></div><div style="left:682px;top:551px;width:63px;height:25px;background:#f0f7fb;"></div><div style="left:746px;top:551px;width:63px;height:25px;background:#f0f7fb;"></div><div style="left:810px;top:551px;width:79px;height:25px;background:#f0f7fb;"></div><div style="left:2px;top:577px;width:1027px;height:25px;background:#f0f0f0;"></div><div style="left:3px;top:577px;width:80px;height:25px;background:#009900;"></div><div style="left:490px;top:577px;width:53px;height:25px;background:#fdf9f6;"></div><div style="left:544px;top:577px;width:82px;height:25px;background:#fdf9f6;"></div><div style="left:627px;top:577px;width:54px;height:25px;background:#fdf9f6;"></div><div style="left:682px;top:577px;width:63px;height:25px;background:#f0f7fb;"></div><div style="left:746px;top:577px;width:63px;height:25px;background:#f0f7fb;"></div><div style="left:810px;top:577px;width:79px;height:25px;background:#f0f7fb;"></div><div style="left:2px;top:603px;width:1027px;height:25px;background:#ffffff;"></div><div style="left:3px;top:603px;width:80px;height:25px;background:#009900;"></div><div style="left:490px;top:603px;width:53px;height:25px;background:#fdf9f6;"></div><div style="left:544px;top:603px;width:82px;height:25px;background:#fdf9f6;"></div><div style="left:627px;top:603px;width:54px;height:25px;background:#fdf9f6;"></div><div style="left:682px;top:603px;width:63px;height:25px;background:#f0f7fb;"></div><div style="left:746px;top:603px;width:63px;height:25px;background:#f0f7fb;"></div><div style="left:810px;top:603px;width:79px;height:25px;background:#f0f7fb;"></div><div style="left:2px;top:629px;width:1027px;height:25px;background:#f0f0f0;"></div><div style="left:3px;top:629px;width:80px;height:25px;background:#003309;"></div><div style="left:490px;top:629px;width:53px;height:25px;background:#fdf9f6;"></div><div style="left:544px;top:629px;width:82px;height:25px;background:#fdf9f6;"></div><div style="left:627px;top:629px;width:54px;height:25px;background:#fdf9f6;"></div><div style="left:682px;top:629px;width:63px;height:25px;background:#f0f7fb;"></div><div style="left:746px;top:629px;width:63px;height:25px;background:#f0f7fb;"></div><div style="left:810px;top:629px;width:79px;height:25px;background:#f0f7fb;"></div><div style="left:2px;top:655px;width:1027px;height:25px;background:#ffffff;"></div><div style="left:3px;top:655px;width:80px;height:25px;background:#009900;"></div><div style="left:490px;top:655px;width:53px;height:25px;background:#fdf9f6;"></div><div style="left:544px;top:655px;width:82px;height:25px;background:#fdf9f6;"></div><div style="left:627px;top:655px;width:54px;height:25px;background:#fdf9f6;"></div><div style="left:682px;top:655px;width:63px;height:25px;background:#f0f7fb;"></div><div style="left:746px;top:655px;width:63px;height:25px;background:#f0f7fb;"></div><div style="left:810px;top:655px;width:79px;height:25px;background:#f0f7fb;"></div><div style="left:2px;top:681px;width:1027px;height:25px;background:#f0f0f0;"></div><div style="left:3px;top:681px;width:80px;height:25px;background:#009900;"></div><div style="left:490px;top:681px;width:53px;height:25px;background:#fdf9f6;"></div><div style="left:544px;top:681px;width:82px;height:25px;background:#fdf9f6;"></div><div style="left:627px;top:681px;width:54px;height:25px;background:#fdf9f6;"></div><div style="left:682px;top:681px;width:63px;height:25px;background:#f0f7fb;"></div><div style="left:746px;top:681px;width:63px;height:25px;background:#f0f7fb;"></div><div style="left:810px;top:681px;width:79px;height:25px;background:#f0f7fb;"></div><div style="left:2px;top:707px;width:1027px;height:25px;background:#ffffff;"></div><div style="left:2px;top:407px;width:1028px;height:1px;background:#c0c0c0;"></div><div style="left:489px;top:427px;width:401px;height:1px;background:#c0c0c0;"></div><div style="left:889px;top:427px;width:141px;height:1px;background:#c0c0c0;"></div><div style="left:2px;top:446px;width:1028px;height:1px;background:#c0c0c0;"></div><div style="left:2px;top:472px;width:1028px;height:1px;background:#c0c0c0;"></div><div style="left:2px;top:498px;width:1028px;height:1px;background:#c0c0c0;"></div><div style="left:2px;top:524px;width:1028px;height:1px;background:#c0c0c0;"></div><div style="left:2px;top:550px;width:1028px;height:1px;background:#c0c0c0;"></div><div style="left:2px;top:576px;width:1028px;height:1px;background:#c0c0c0;"></div><div style="left:2px;top:602px;width:1028px;height:1px;background:#c0c0c0;"></div><div style="left:2px;top:628px;width:1028px;height:1px;background:#c0c0c0;"></div><div style="left:2px;top:654px;width:1028px;height:1px;background:#c0c0c0;"></div><div style="left:2px;top:680px;width:1028px;height:1px;background:#c0c0c0;"></div><div style="left:2px;top:706px;width:1028px;height:1px;background:#c0c0c0;"></div><div style="left:2px;top:732px;width:1028px;height:1px;background:#c0c0c0;"></div><div style="left:2px;top:407px;width:1px;height:326px;background:#c0c0c0;"></div><div style="left:83px;top:407px;width:1px;height:300px;background:#c0c0c0;"></div><div style="left:162px;top:407px;width:1px;height:300px;background:#c0c0c0;"></div><div style="left:259px;top:407px;width:1px;height:300px;background:#c0c0c0;"></div><div style="left:353px;top:407px;width:1px;height:300px;background:#c0c0c0;"></div><div style="left:392px;top:407px;width:1px;height:300px;background:#c0c0c0;"></div><div style="left:489px;top:407px;width:1px;height:300px;background:#c0c0c0;"></div><div style="left:543px;top:427px;width:1px;height:280px;background:#c0c0c0;"></div><div style="left:626px;top:427px;width:1px;height:280px;background:#c0c0c0;"></div><div style="left:681px;top:407px;width:1px;height:300px;background:#c0c0c0;"></div><div style="left:745px;top:427px;width:1px;height:280px;background:#c0c0c0;"></div><div style="left:809px;top:427px;width:1px;height:280px;background:#c0c0c0;"></div><div style="left:889px;top:407px;width:1px;height:300px;background:#c0c0c0;"></div><div style="left:929px;top:427px;width:1px;height:280px;background:#c0c0c0;"></div><div style="left:969px;top:427px;width:1px;height:280px;background:#c0c0c0;"></div><div style="left:1029px;top:407px;width:1px;height:326px;background:#c0c0c0;"></div><div class="t" style="left:3px;top:408px;width:80px;height:38px;line-height:38px;color:#222222;">类型</div><div class="t" style="left:84px;top:408px;width:78px;height:38px;line-height:38px;color:#222222;">日期</div><div class="t" style="left:163px;top:408px;width:96px;height:38px;line-height:38px;color:#222222;">主场</div><div class="t" style="left:260px;top:408px;width:93px;height:38px;line-height:38px;color:#222222;">比分(半场)</div><div class="t" style="left:354px;top:408px;width:38px;height:38px;line-height:38px;color:#222222;">角球</div><div class="t" style="left:393px;top:408px;width:96px;height:38px;line-height:38px;color:#222222;">客场</div><div class="t" style="left:490px;top:429px;width:53px;height:18px;line-height:18px;color:#222222;">主</div><div class="t" style="left:544px;top:429px;width:82px;height:18px;line-height:18px;color:#222222;">让球</div><div class="t" style="left:627px;top:429px;width:54px;height:18px;line-height:18px;color:#222222;">客</div><div class="t" style="left:682px;top:429px;width:63px;height:18px;line-height:18px;color:#222222;">主</div><div class="t" style="left:746px;top:429px;width:63px;height:18px;line-height:18px;color:#222222;">和</div><div class="t" style="left:810px;top:429px;width:79px;height:18px;line-height:18px;color:#222222;">客</div><div class="t" style="left:890px;top:429px;width:39px;height:18px;line-height:18px;color:#222222;">胜负</div><div class="t" style="left:930px;top:429px;width:39px;height:18px;line-height:18px;color:#222222;">让球</div><div class="t" style="left:970px;top:429px;width:59px;height:18px;line-height:18px;color:#222222;">进球数</div><div class="t" style="left:3px;top:448px;width:80px;height:25px;line-height:25px;color:#ffffff;font-size:12px;">日职联</div><div class="t" style="left:84px;top:448px;width:78px;height:25px;line-height:25px;color:#222222;font-size:12px;">25-07-20</div><div class="t" style="left:163px;top:448px;width:96px;height:25px;line-height:25px;color:#207020;font-size:12px;">新泻天鹅</div><div class="t" style="left:260px;top:448px;width:93px;height:25px;line-height:25px;color:#222222;font-size:12px;"><span style="color:#c01c1c">0-2</span>(0-1)</div><div class="t" style="left:354px;top:448px;width:38px;height:25px;line-height:25px;color:#222222;font-size:12px;">5-2</div><div class="t" style="left:393px;top:448px;width:96px;height:25px;line-height:25px;color:#222222;font-size:12px;">广岛三箭</div><div class="t" style="left:490px;top:448px;width:53px;height:25px;line-height:25px;color:#222222;font-size:12px;">0.86</div><div class="t" style="left:544px;top:448px;width:82px;height:25px;line-height:25px;color:#222222;font-size:12px;">受一球</div><div class="t" style="left:627px;top:448px;width:54px;height:25px;line-height:25px;color:#222222;font-size:12px;">1.03</div><div class="t" style="left:682px;top:448px;width:63px;height:25px;line-height:25px;color:#222222;font-size:12px;">5.47</div><div class="t" style="left:746px;top:448px;width:63px;height:25px;line-height:25px;color:#222222;font-size:12px;">4.05</div><div class="t" style="left:810px;top:448px;width:79px;height:25px;line-height:25px;color:#222222;font-size:12px;">1.55</div><div class="t" style="left:889px;top:448px;width:39px;height:25px;line-height:25px;color:#1616b8;font-size:12px;">负</div><div class="t" style="left:929px;top:448px;width:39px;height:25px;line-height:25px;color:#1616b8;font-size:12px;">输</div><div class="t" style="left:969px;top:448px;width:59px;height:25px;line-height:25px;color:#1616b8;font-size:12px;">小</div><div class="t" style="left:3px;top:474px;width:80px;height:25px;line-height:25px;color:#ffffff;font-size:12px;">日皇杯</div><div class="t" style="left:84px;top:474px;width:78px;height:25px;line-height:25px;color:#222222;font-size:12px;">25-07-16</div><div class="t" style="left:163px;top:474px;width:96px;height:25px;line-height:25px;color:#207020;font-size:12px;">新泻天鹅</div><div class="t" style="left:260px;top:474px;width:93px;height:25px;line-height:25px;color:#222222;font-size:12px;"><span style="color:#c01c1c">1-2</span>(0-1)</div><div class="t" style="left:354px;top:474px;width:38px;height:25px;line-height:25px;color:#222222;font-size:12px;">1-3</div><div class="t" style="left:393px;top:474px;width:96px;height:25px;line-height:25px;color:#222222;font-size:12px;">东洋大学</div><div class="t" style="left:490px;top:474px;width:53px;height:25px;line-height:25px;color:#222222;font-size:12px;"></div><div class="t" style="left:544px;top:474px;width:82px;height:25px;line-height:25px;color:#222222;font-size:12px;"></div><div class="t" style="left:627px;top:474px;width:54px;height:25px;line-height:25px;color:#222222;font-size:12px;"></div><div class="t" style="left:682px;top:474px;width:63px;height:25px;line-height:25px;color:#222222;font-size:12px;"></div><div class="t" style="left:746px;top:474px;width:63px;height:25px;line-height:25px;color:#222222;font-size:12px;"></div><div class="t" style="left:810px;top:474px;width:79px;height:25px;line-height:25px;color:#222222;font-size:12px;"></div><div class="t" style="left:889px;top:474px;width:39px;height:25px;line-height:25px;color:#1616b8;font-size:12px;">负</div><div class="t" style="left:3px;top:500px;width:80px;height:25px;line-height:25px;color:#ffffff;font-size:12px;">日职联</div><div class="t" style="left:84px;top:500px;width:78px;height:25px;line-height:25px;color:#222222;font-size:12px;">25-07-05</div><div class="t" style="left:163px;top:500px;width:96px;height:25px;line-height:25px;color:#222222;font-size:12px;">京都不死鸟</div><div class="t" style="left:260px;top:500px;width:93px;height:25px;line-height:25px;color:#222222;font-size:12px;"><span style="color:#c01c1c">2-1</span>(2-1)</div><div class="t" style="left:354px;top:500px;width:38px;height:25px;line-height:25px;color:#222222;font-size:12px;">6-7</div><div class="t" style="left:393px;top:500px;width:96px;height:25px;line-height:25px;color:#207020;font-size:12px;">新泻天鹅</div><div class="t" style="left:490px;top:500px;width:53px;height:25px;line-height:25px;color:#222222;font-size:12px;">1.02</div><div class="t" style="left:544px;top:500px;width:82px;height:25px;line-height:25px;color:#222222;font-size:12px;">半/一</div><div class="t" style="left:627px;top:500px;width:54px;height:25px;line-height:25px;color:#222222;font-size:12px;">0.87</div><div class="t" style="left:682px;top:500px;width:63px;height:25px;line-height:25px;color:#222222;font-size:12px;">1.83</div><div class="t" style="left:746px;top:500px;width:63px;height:25px;line-height:25px;color:#222222;font-size:12px;">3.57</div><div class="t" style="left:810px;top:500px;width:79px;height:25px;line-height:25px;color:#222222;font-size:12px;">3.99</div><div class="t" style="left:889px;top:500px;width:39px;height:25px;line-height:25px;color:#1616b8;font-size:12px;">负</div><div class="t" style="left:929px;top:500px;width:39px;height:25px;line-height:25px;color:#1616b8;font-size:12px;">输</div><div class="t" style="left:969px;top:500px;width:59px;height:25px;line-height:25px;color:#c01c1c;font-size:12px;">大</div><div class="t" style="left:3px;top:526px;width:80px;height:25px;line-height:25px;color:#ffffff;font-size:12px;">日职联</div><div class="t" style="left:84px;top:526px;width:78px;height:25px;line-height:25px;color:#222222;font-size:12px;">25-06-29</div><div class="t" style="left:163px;top:526px;width:96px;height:25px;line-height:25px;color:#207020;font-size:12px;">新泻天鹅</div><div class="t" style="left:260px;top:526px;width:93px;height:25px;line-height:25px;color:#222222;font-size:12px;"><span style="color:#c01c1c">0-4</span>(0-1)</div><div class="t" style="left:354px;top:526px;width:38px;height:25px;line-height:25px;color:#222222;font-size:12px;">6-9</div><div class="t" style="left:393px;top:526px;width:96px;height:25px;line-height:25px;color:#222222;font-size:12px;">町田泽维亚</div><div class="t" style="left:490px;top:526px;width:53px;height:25px;line-height:25px;color:#222222;font-size:12px;">0.82</div><div class="t" style="left:544px;top:526px;width:82px;height:25px;line-height:25px;color:#222222;font-size:12px;">受半球</div><div class="t" style="left:627px;top:526px;width:54px;height:25px;line-height:25px;color:#222222;font-size:12px;">1.07</div><div class="t" style="left:682px;top:526px;width:63px;height:25px;line-height:25px;color:#222222;font-size:12px;">3.94</div><div class="t" style="left:746px;top:526px;width:63px;height:25px;line-height:25px;color:#222222;font-size:12px;">3.24</div><div class="t" style="left:810px;top:526px;width:79px;height:25px;line-height:25px;color:#222222;font-size:12px;">1.94</div><div class="t" style="left:889px;top:526px;width:39px;height:25px;line-height:25px;color:#1616b8;font-size:12px;">负</div><div class="t" style="left:929px;top:526px;width:39px;height:25px;line-height:25px;color:#1616b8;font-size:12px;">输</div><div class="t" style="left:969px;top:526px;width:59px;height:25px;line-height:25px;color:#c01c1c;font-size:12px;">大</div><div class="t" style="left:3px;top:552px;width:80px;height:25px;line-height:25px;color:#ffffff;font-size:12px;">日职联</div><div class="t" style="left:84px;top:552px;width:78px;height:25px;line-height:25px;color:#222222;font-size:12px;">25-06-25</div><div class="t" style="left:163px;top:552px;width:96px;height:25px;line-height:25px;color:#222222;font-size:12px;">川崎前锋</div><div class="t" style="left:260px;top:552px;width:93px;height:25px;line-height:25px;color:#222222;font-size:12px;"><span style="color:#c01c1c">3-1</span>(2-0)</div><div class="t" style="left:354px;top:552px;width:38px;height:25px;line-height:25px;color:#222222;font-size:12px;">2-5</div><div class="t" style="left:393px;top:552px;width:96px;height:25px;line-height:25px;color:#207020;font-size:12px;">新泻天鹅</div><div class="t" style="left:490px;top:552px;width:53px;height:25px;line-height:25px;color:#222222;font-size:12px;">0.98</div><div class="t" style="left:544px;top:552px;width:82px;height:25px;line-height:25px;color:#222222;font-size:12px;">半/一</div><div class="t" style="left:627px;top:552px;width:54px;height:25px;line-height:25px;color:#222222;font-size:12px;">0.91</div><div class="t" style="left:682px;top:552px;width:63px;height:25px;line-height:25px;color:#222222;font-size:12px;">1.73</div><div class="t" style="left:746px;top:552px;width:63px;height:25px;line-height:25px;color:#222222;font-size:12px;">3.74</div><div class="t" style="left:810px;top:552px;width:79px;height:25px;line-height:25px;color:#222222;font-size:12px;">4.32</div><div class="t" style="left:889px;top:552px;width:39px;height:25px;line-height:25px;color:#1616b8;font-size:12px;">负</div><div class="t" style="left:929px;top:552px;width:39px;height:25px;line-height:25px;color:#1616b8;font-size:12px;">输</div><div class="t" style="left:969px;top:552px;width:59px;height:25px;line-height:25px;color:#c01c1c;font-size:12px;">大</div><div class="t" style="left:3px;top:578px;width:80px;height:25px;line-height:25px;color:#ffffff;font-size:12px;">日职联</div><div class="t" style="left:84px;top:578px;width:78px;height:25px;line-height:25px;color:#222222;font-size:12px;">25-06-21</div><div class="t" style="left:163px;top:578px;width:96px;height:25px;line-height:25px;color:#222222;font-size:12px;">福冈黄蜂</div><div class="t" style="left:260px;top:578px;width:93px;height:25px;line-height:25px;color:#222222;font-size:12px;"><span style="color:#c01c1c">3-2</span>(3-2)</div><div class="t" style="left:354px;top:578px;width:38px;height:25px;line-height:25px;color:#222222;font-size:12px;">2-3</div><div class="t" style="left:393px;top:578px;width:96px;height:25px;line-height:25px;color:#207020;font-size:12px;">新泻天鹅</div><div class="t" style="left:490px;top:578px;width:53px;height:25px;line-height:25px;color:#222222;font-size:12px;">1.07</div><div class="t" style="left:544px;top:578px;width:82px;height:25px;line-height:25px;color:#222222;font-size:12px;">平/半</div><div class="t" style="left:627px;top:578px;width:54px;height:25px;line-height:25px;color:#222222;font-size:12px;">0.82</div><div class="t" style="left:682px;top:578px;width:63px;height:25px;line-height:25px;color:#222222;font-size:12px;">2.54</div><div class="t" style="left:746px;top:578px;width:63px;height:25px;line-height:25px;color:#222222;font-size:12px;">2.97</div><div class="t" style="left:810px;top:578px;width:79px;height:25px;line-height:25px;color:#222222;font-size:12px;">2.88</div><div class="t" style="left:889px;top:578px;width:39px;height:25px;line-height:25px;color:#1616b8;font-size:12px;">负</div><div class="t" style="left:929px;top:578px;width:39px;height:25px;line-height:25px;color:#1616b8;font-size:12px;">输</div><div class="t" style="left:969px;top:578px;width:59px;height:25px;line-height:25px;color:#c01c1c;font-size:12px;">大</div><div class="t" style="left:3px;top:604px;width:80px;height:25px;line-height:25px;color:#ffffff;font-size:12px;">日职联</div><div class="t" style="left:84px;top:604px;width:78px;height:25px;line-height:25px;color:#222222;font-size:12px;">25-06-15</div><div class="t" style="left:163px;top:604px;width:96px;height:25px;line-height:25px;color:#207020;font-size:12px;">新泻天鹅</div><div class="t" style="left:260px;top:604px;width:93px;height:25px;line-height:25px;color:#222222;font-size:12px;"><span style="color:#c01c1c">1-0</span>(0-0)</div><div class="t" style="left:354px;top:604px;width:38px;height:25px;line-height:25px;color:#222222;font-size:12px;">7-3</div><div class="t" style="left:393px;top:604px;width:96px;height:25px;line-height:25px;color:#222222;font-size:12px;">横滨水手</div><div class="t" style="left:490px;top:604px;width:53px;height:25px;line-height:25px;color:#222222;font-size:12px;">0.85</div><div class="t" style="left:544px;top:604px;width:82px;height:25px;line-height:25px;color:#222222;font-size:12px;">平/半</div><div class="t" style="left:627px;top:604px;width:54px;height:25px;line-height:25px;color:#222222;font-size:12px;">1.04</div><div class="t" style="left:682px;top:604px;width:63px;height:25px;line-height:25px;color:#222222;font-size:12px;">2.16</div><div class="t" style="left:746px;top:604px;width:63px;height:25px;line-height:25px;color:#222222;font-size:12px;">3.53</div><div class="t" style="left:810px;top:604px;width:79px;height:25px;line-height:25px;color:#222222;font-size:12px;">3.03</div><div class="t" style="left:889px;top:604px;width:39px;height:25px;line-height:25px;color:#c01c1c;font-size:12px;">胜</div><div class="t" style="left:929px;top:604px;width:39px;height:25px;line-height:25px;color:#c01c1c;font-size:12px;">赢</div><div class="t" style="left:969px;top:604px;width:59px;height:25px;line-height:25px;color:#1616b8;font-size:12px;">小</div><div class="t" style="left:3px;top:630px;width:80px;height:25px;line-height:25px;color:#ffffff;font-size:12px;">日皇杯</div><div class="t" style="left:84px;top:630px;width:78px;height:25px;line-height:25px;color:#222222;font-size:12px;">25-06-11</div><div class="t" style="left:163px;top:630px;width:96px;height:25px;line-height:25px;color:#207020;font-size:12px;">新泻天鹅</div><div class="t" style="left:260px;top:630px;width:93px;height:25px;line-height:25px;color:#222222;font-size:12px;"><span style="color:#c01c1c">0-0</span>(0-0)</div><div class="t" style="left:354px;top:630px;width:38px;height:25px;line-height:25px;color:#222222;font-size:12px;">6-5</div><div class="t" style="left:393px;top:630px;width:96px;height:25px;line-height:25px;color:#222222;font-size:12px;">福山市FC</div><div class="t" style="left:490px;top:630px;width:53px;height:25px;line-height:25px;color:#222222;font-size:12px;">0.92</div><div class="t" style="left:544px;top:630px;width:82px;height:25px;line-height:25px;color:#222222;font-size:12px;">两球</div><div class="t" style="left:627px;top:630px;width:54px;height:25px;line-height:25px;color:#222222;font-size:12px;">0.90</div><div class="t" style="left:682px;top:630px;width:63px;height:25px;line-height:25px;color:#222222;font-size:12px;">1.14</div><div class="t" style="left:746px;top:630px;width:63px;height:25px;line-height:25px;color:#222222;font-size:12px;">7.35</div><div class="t" style="left:810px;top:630px;width:79px;height:25px;line-height:25px;color:#222222;font-size:12px;">12.12</div><div class="t" style="left:889px;top:630px;width:39px;height:25px;line-height:25px;color:#207020;font-size:12px;">平</div><div class="t" style="left:929px;top:630px;width:39px;height:25px;line-height:25px;color:#1616b8;font-size:12px;">输</div><div class="t" style="left:969px;top:630px;width:59px;height:25px;line-height:25px;color:#1616b8;font-size:12px;">小</div><div class="t" style="left:3px;top:656px;width:80px;height:25px;line-height:25px;color:#ffffff;font-size:12px;">日职联</div><div class="t" style="left:84px;top:656px;width:78px;height:25px;line-height:25px;color:#222222;font-size:12px;">25-05-31</div><div class="t" style="left:163px;top:656px;width:96px;height:25px;line-height:25px;color:#222222;font-size:12px;">名古屋鲸八</div><div class="t" style="left:260px;top:656px;width:93px;height:25px;line-height:25px;color:#222222;font-size:12px;"><span style="color:#c01c1c">3-0</span>(0-0)</div><div class="t" style="left:354px;top:656px;width:38px;height:25px;line-height:25px;color:#222222;font-size:12px;">8-3</div><div class="t" style="left:393px;top:656px;width:96px;height:25px;line-height:25px;color:#207020;font-size:12px;">新泻天鹅</div><div class="t" style="left:490px;top:656px;width:53px;height:25px;line-height:25px;color:#222222;font-size:12px;">0.90</div><div class="t" style="left:544px;top:656px;width:82px;height:25px;line-height:25px;color:#222222;font-size:12px;">平/半</div><div class="t" style="left:627px;top:656px;width:54px;height:25px;line-height:25px;color:#222222;font-size:12px;">0.99</div><div class="t" style="left:682px;top:656px;width:63px;height:25px;line-height:25px;color:#222222;font-size:12px;">2.10</div><div class="t" style="left:746px;top:656px;width:63px;height:25px;line-height:25px;color:#222222;font-size:12px;">3.14</div><div class="t" style="left:810px;top:656px;width:79px;height:25px;line-height:25px;color:#222222;font-size:12px;">3.55</div><div class="t" style="left:889px;top:656px;width:39px;height:25px;line-height:25px;color:#1616b8;font-size:12px;">负</div><div class="t" style="left:929px;top:656px;width:39px;height:25px;line-height:25px;color:#1616b8;font-size:12px;">输</div><div class="t" style="left:969px;top:656px;width:59px;height:25px;line-height:25px;color:#c01c1c;font-size:12px;">大</div><div class="t" style="left:3px;top:682px;width:80px;height:25px;line-height:25px;color:#ffffff;font-size:12px;">日职联</div><div class="t" style="left:84px;top:682px;width:78px;height:25px;line-height:25px;color:#222222;font-size:12px;">25-05-25</div><div class="t" style="left:163px;top:682px;width:96px;height:25px;line-height:25px;color:#207020;font-size:12px;">新泻天鹅</div><div class="t" style="left:260px;top:682px;width:93px;height:25px;line-height:25px;color:#222222;font-size:12px;"><span style="color:#c01c1c">2-1</span>(1-1)</div><div class="t" style="left:354px;top:682px;width:38px;height:25px;line-height:25px;color:#222222;font-size:12px;">3-5</div><div class="t" style="left:393px;top:682px;width:96px;height:25px;line-height:25px;color:#222222;font-size:12px;">湘南海洋</div><div class="t" style="left:490px;top:682px;width:53px;height:25px;line-height:25px;color:#222222;font-size:12px;">0.96</div><div class="t" style="left:544px;top:682px;width:82px;height:25px;line-height:25px;color:#222222;font-size:12px;">平/半</div><div class="t" style="left:627px;top:682px;width:54px;height:25px;line-height:25px;color:#222222;font-size:12px;">0.93</div><div class="t" style="left:682px;top:682px;width:63px;height:25px;line-height:25px;color:#222222;font-size:12px;">2.30</div><div class="t" style="left:746px;top:682px;width:63px;height:25px;line-height:25px;color:#222222;font-size:12px;">3.17</div><div class="t" style="left:810px;top:682px;width:79px;height:25px;line-height:25px;color:#222222;font-size:12px;">3.09</div><div class="t" style="left:889px;top:682px;width:39px;height:25px;line-height:25px;color:#c01c1c;font-size:12px;">胜</div><div class="t" style="left:929px;top:682px;width:39px;height:25px;line-height:25px;color:#c01c1c;font-size:12px;">赢</div><div class="t" style="left:969px;top:682px;width:59px;height:25px;line-height:25px;color:#c01c1c;font-size:12px;">大</div><div class="t" style="left:3px;top:708px;width:1026px;height:25px;line-height:25px;color:#222222;font-size:12px;letter-spacing:0.2px;">近<span style="color:#c01c1c">10</span>场,胜2平1负7, 胜率:<span style="color:#c01c1c">20%</span> 让胜率:<span style="color:#c01c1c">22.2%</span> 大率:<span style="color:#c01c1c">66.7%</span> 单率:<span style="color:#c01c1c">60%</span></div><div class="t" style="left:386px;top:389px;height:16px;line-height:16px;text-align:left;white-space:nowrap;">近</div><div class="sel" style="left:402px;top:388px;width:36px;height:15px;"><span style="position:absolute;left:5px;top:0;line-height:15px;font-size:14px;font-family:'Liberation Serif',serif;padding-top:1px;">10</span><svg style="position:absolute;right:4px;top:4px" width="10" height="6" viewBox="0 0 10 6"><path d="M1 0.8 L5 4.8 L9 0.8" fill="none" stroke="#000" stroke-width="2"/></svg></div><div class="t" style="left:445px;top:389px;height:16px;line-height:16px;text-align:left;white-space:nowrap;">场</div><div class="cb" style="left:460px;top:388px;"></div><div class="t" style="left:477px;top:389px;height:16px;line-height:16px;text-align:left;white-space:nowrap;">同客</div><div class="cb on" style="left:505px;top:388px;"><svg width="13" height="13" viewBox="0 0 13 13" style="position:absolute;left:0;top:0"><path d="M2.6 6.3 L5.4 9.2 L10.6 3" fill="none" stroke="#fff" stroke-width="2.3"/></svg></div><div class="t" style="left:519px;top:389px;height:16px;line-height:16px;text-align:left;white-space:nowrap;">日职联</div><div class="cb on" style="left:554px;top:388px;"><svg width="13" height="13" viewBox="0 0 13 13" style="position:absolute;left:0;top:0"><path d="M2.6 6.3 L5.4 9.2 L10.6 3" fill="none" stroke="#fff" stroke-width="2.3"/></svg></div><div class="t" style="left:568px;top:389px;height:16px;line-height:16px;text-align:left;white-space:nowrap;">日皇杯</div><div class="cb on" style="left:603px;top:388px;"><svg width="13" height="13" viewBox="0 0 13 13" style="position:absolute;left:0;top:0"><path d="M2.6 6.3 L5.4 9.2 L10.6 3" fill="none" stroke="#fff" stroke-width="2.3"/></svg></div><div class="t" style="left:617px;top:389px;height:16px;line-height:16px;text-align:left;white-space:nowrap;">日联杯</div><div class="cb on" style="left:652px;top:388px;"><svg width="13" height="13" viewBox="0 0 13 13" style="position:absolute;left:0;top:0"><path d="M2.6 6.3 L5.4 9.2 L10.6 3" fill="none" stroke="#fff" stroke-width="2.3"/></svg></div><div class="t" style="left:666px;top:389px;height:16px;line-height:16px;text-align:left;white-space:nowrap;">球会友谊</div><div class="sel" style="left:525px;top:408px;width:59px;height:17px;"><span style="position:absolute;left:5px;top:0;line-height:17px;font-size:13.5px;">Crow*</span><svg style="position:absolute;right:4px;top:5px" width="10" height="6" viewBox="0 0 10 6"><path d="M1 0.8 L5 4.8 L9 0.8" fill="none" stroke="#000" stroke-width="2"/></svg></div><div class="sel" style="left:593px;top:408px;width:49px;height:17px;"><span style="position:absolute;left:4px;top:0;line-height:17px;font-size:13px;">终指</span><svg style="position:absolute;right:4px;top:5px" width="10" height="6" viewBox="0 0 10 6"><path d="M1 0.8 L5 4.8 L9 0.8" fill="none" stroke="#000" stroke-width="2"/></svg></div><div class="sel" style="left:721px;top:408px;width:68px;height:17px;"><span style="position:absolute;left:4px;top:0;line-height:17px;font-size:13px;">平均值</span><svg style="position:absolute;right:4px;top:5px" width="10" height="6" viewBox="0 0 10 6"><path d="M1 0.8 L5 4.8 L9 0.8" fill="none" stroke="#000" stroke-width="2"/></svg></div><div class="sel" style="left:798px;top:408px;width:49px;height:17px;"><span style="position:absolute;left:4px;top:0;line-height:17px;font-size:13px;">终指</span><svg style="position:absolute;right:4px;top:5px" width="10" height="6" viewBox="0 0 10 6"><path d="M1 0.8 L5 4.8 L9 0.8" fill="none" stroke="#000" stroke-width="2"/></svg></div><div class="sel" style="left:934px;top:408px;width:49px;height:17px;"><span style="position:absolute;left:4px;top:0;line-height:17px;font-size:13px;">全场</span><svg style="position:absolute;right:4px;top:5px" width="10" height="6" viewBox="0 0 10 6"><path d="M1 0.8 L5 4.8 L9 0.8" fill="none" stroke="#000" stroke-width="2"/></svg></div></body></html>
